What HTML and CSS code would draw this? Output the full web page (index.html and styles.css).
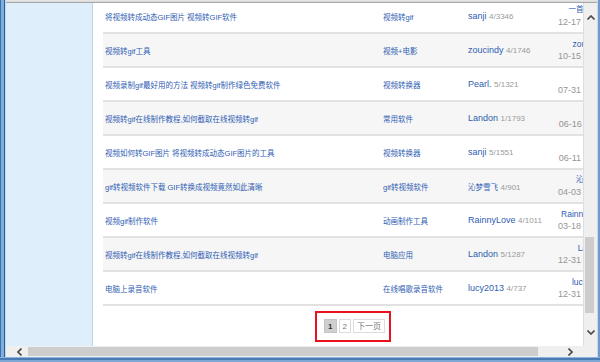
FILE: index.html
```html
<!DOCTYPE html>
<html lang="zh-CN">
<head>
  <meta charset="UTF-8">
  <title>视频转gif - 相关帖子</title>
  <link rel="stylesheet" href="styles.css">
</head>
<body>
  <div class="window">
    <div class="frame-left"></div>
    <div class="client">
      <div class="topline"></div>
      <div class="view">
        <div class="page">
          <div class="side"></div>
          <div class="main">
            <ul class="topics">
              <li class="row">
                <a class="title">将视频转成动态GIF图片 视频转GIF软件</a>
                <a class="cat">视频转gif</a>
                <span class="author"><a>sanji</a> <em>4/3346</em></span>
                <span class="last"><a class="cjk">一首情歌吧</a><i>12-17 14:22</i></span>
              </li>
              <li class="row">
                <a class="title">视频转gif工具</a>
                <a class="cat">视频+电影</a>
                <span class="author"><a>zoucindy</a> <em>4/1746</em></span>
                <span class="last"><a>zoucindy</a><i>10-15 09:41</i></span>
              </li>
              <li class="row">
                <a class="title">视频录制gif最好用的方法 视频转gif制作绿色免费软件</a>
                <a class="cat">视频转换器</a>
                <span class="author"><a>Pearl.</a> <em>5/1321</em></span>
                <span class="last"><a class="cjk">小白</a><i>07-31 16:08</i></span>
              </li>
              <li class="row">
                <a class="title">视频转gif在线制作教程,如何截取在线视频转gif</a>
                <a class="cat">常用软件</a>
                <span class="author"><a>Landon</a> <em>1/1793</em></span>
                <span class="last"><a class="cjk">小鱼</a><i>06-16 11:30</i></span>
              </li>
              <li class="row">
                <a class="title">视频如何转GIF图片 将视频转成动态GIF图片的工具</a>
                <a class="cat">视频转换器</a>
                <span class="author"><a>sanji</a> <em>5/1551</em></span>
                <span class="last"><a class="cjk">阿飞</a><i>06-11 20:15</i></span>
              </li>
              <li class="row">
                <a class="title">gif转视频软件下载 GIF转换成视频竟然如此清晰</a>
                <a class="cat">gif转视频软件</a>
                <span class="author"><a class="cjk">沁梦雪飞</a> <em>4/901</em></span>
                <span class="last"><a class="cjk">沁梦雪飞</a><i>04-03 08:52</i></span>
              </li>
              <li class="row">
                <a class="title">视频gif制作软件</a>
                <a class="cat">动画制作工具</a>
                <span class="author"><a>RainnyLove</a> <em>4/1011</em></span>
                <span class="last"><a>RainnyLove</a><i>03-18 17:26</i></span>
              </li>
              <li class="row">
                <a class="title">视频转gif在线制作教程,如何截取在线视频转gif</a>
                <a class="cat">电脑应用</a>
                <span class="author"><a>Landon</a> <em>5/1287</em></span>
                <span class="last"><a>Landon</a><i>12-31 10:04</i></span>
              </li>
              <li class="row">
                <a class="title">电脑上录音软件</a>
                <a class="cat">在线唱歌录音软件</a>
                <span class="author"><a>lucy2013</a> <em>4/737</em></span>
                <span class="last"><a>lucy2013</a><i>12-31 09:47</i></span>
              </li>
            </ul>
            <div class="pager-wrap">
              <div class="pager">
                <span class="pg current">1</span>
                <a class="pg">2</a>
                <a class="pg">下一页</a>
              </div>
            </div>
          </div>
        </div>
        <div class="vscroll">
          <div class="vbtn">
            <svg width="8" height="5" viewBox="0 0 8 5"><polyline points="0.5,4.5 4,1 7.5,4.5" fill="none" stroke="#4a4a4a" stroke-width="1.6"/></svg>
          </div>
          <div class="vtrack"><div class="vthumb"></div></div>
          <div class="vbtn">
            <svg width="8" height="5" viewBox="0 0 8 5"><polyline points="0.5,0.5 4,4 7.5,0.5" fill="none" stroke="#4a4a4a" stroke-width="1.6"/></svg>
          </div>
        </div>
      </div>
      <div class="hbar">
        <div class="hscroll">
          <div class="hbtn left">
            <svg width="5" height="8" viewBox="0 0 5 8"><polyline points="4.5,0.5 1,4 4.5,7.5" fill="none" stroke="#4a4a4a" stroke-width="1.6"/></svg>
          </div>
          <div class="hthumb"></div>
          <div class="htrack"></div>
          <div class="hbtn right">
            <svg width="5" height="8" viewBox="0 0 5 8"><polyline points="0.5,0.5 4,4 0.5,7.5" fill="none" stroke="#4a4a4a" stroke-width="1.6"/></svg>
          </div>
        </div>
        <div class="corner"></div>
      </div>
    </div>
    <div class="frame-right"></div>
    <div class="frame-bottom"></div>
  </div>
</body>
</html>
```

FILE: styles.css
```css
html, body {
  margin: 0;
  padding: 0;
  background: #fff;
}
body {
  font-family: "Liberation Sans", "Noto Sans CJK SC", sans-serif;
  font-size: 8px;
}
.window {
  width: 600px;
  height: 362px;
  display: grid;
  grid-template-columns: 6px 591px 3px;
  grid-template-rows: 357px 5px;
  overflow: hidden;
}
.frame-left {
  background: linear-gradient(to right, #3f6fa8 0, #3f6fa8 1px, #7eaede 1px, #7eaede 4px, #2f5d95 4px, #2f5d95 5px, #c2daf0 5px);
}
.frame-right {
  background: linear-gradient(to right, #c9d9ea 0, #c9d9ea 1px, #6f9acb 1px);
}
.frame-bottom {
  grid-column: 1 / 4;
  background: linear-gradient(#8db2db 0, #8db2db 1px, #4a7bb5 1px, #4a7bb5 3px, #7ea7d6 3px);
}
.client {
  display: grid;
  grid-template-rows: 3px 343px 11px;
  overflow: hidden;
}
.topline {
  background: linear-gradient(#ececec, #d2d2d2);
  border-bottom: 1px solid #a8a8a8;
  box-sizing: border-box;
}
.view {
  display: grid;
  grid-template-columns: 577px 14px;
  overflow: hidden;
}
.page {
  display: flex;
  overflow: hidden;
}
.side {
  flex: 0 0 86px;
  background: #dfeefb;
  border-right: 1px solid #bad6ee;
}
.main {
  flex: 0 0 auto;
  width: 513px;
  padding-left: 10px;
  background: #fff;
}
.topics {
  list-style: none;
  margin: -3px 0 0;
  padding: 0;
  width: 503px;
}
.row {
  display: grid;
  grid-template-columns: 280px 85px 70px 68px;
  align-items: center;
  height: 34px;
  box-sizing: border-box;
  border-bottom: 2px solid #e2e2e2;
  background: #fff;
}
.row:nth-child(even) {
  background: #f6f6f6;
}
.row a {
  color: #2f5db3;
  text-decoration: none;
}
.title {
  padding-left: 2px;
  font-size: 7.5px;
  white-space: nowrap;
}
.cat {
  font-size: 7.5px;
  white-space: nowrap;
}
.author {
  font-size: 9px;
  white-space: nowrap;
}
.author em {
  font-style: normal;
  font-size: 8px;
  color: #9a9a9a;
}
.row .cjk {
  font-size: 7.5px;
}
.last {
  display: flex;
  flex-direction: column;
  align-items: flex-end;
  font-size: 8.5px;
  line-height: 12px;
  white-space: nowrap;
}
.last i {
  font-style: normal;
  font-size: 9px;
  color: #959595;
}
.pager-wrap {
  width: 500px;
  display: flex;
  justify-content: center;
  padding-top: 5px;
}
.pager {
  display: flex;
  gap: 2px;
  border: 2px solid #e8121c;
  padding: 6px 4px 7px 7px;
}
.pg {
  height: 14px;
  line-height: 14px;
  padding: 0 3px;
  text-align: center;
  border: 1px solid #dcdcdc;
  background: #fff;
  color: #777;
  box-sizing: border-box;
  min-width: 12px;
}
.pg.current {
  background: #cfcfcf;
  border-color: #c4c4c4;
  color: #333;
  font-weight: bold;
}
.vscroll {
  display: flex;
  flex-direction: column;
  background: #efefef;
  border-left: 1px solid #dedede;
}
.vbtn {
  height: 28px;
  display: flex;
  align-items: center;
  justify-content: center;
}
.vtrack {
  flex: 1;
}
.vthumb {
  margin: 206px 3px 0 1px;
  height: 76px;
  background: #cdcdcd;
}
.hbar {
  display: grid;
  grid-template-columns: 577px 14px;
}
.hscroll {
  display: flex;
  background: #efefef;
}
.hbtn {
  display: flex;
  align-items: center;
}
.hbtn.left {
  width: 22px;
  padding-left: 11px;
  box-sizing: border-box;
}
.hbtn.right {
  width: 26px;
  justify-content: center;
}
.hthumb {
  width: 510px;
  background: #cdcdcd;
  margin: 1px 0;
}
.htrack {
  flex: 1;
}
.corner {
  background: #efefef;
}
```
